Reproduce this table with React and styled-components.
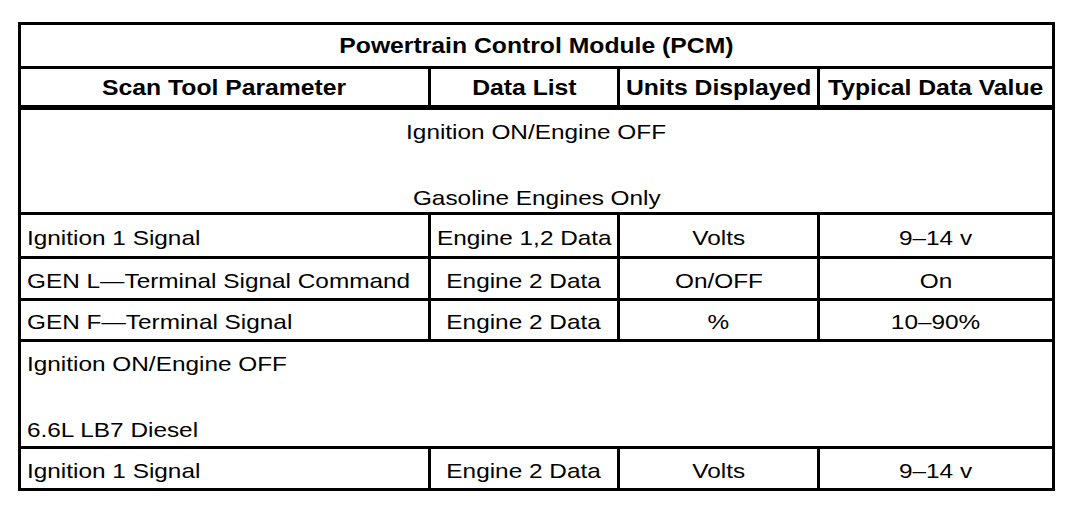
import React from 'react'
import styled, { createGlobalStyle } from 'styled-components'

const GlobalStyle = createGlobalStyle`
  html, body {
    margin: 0;
    padding: 0;
    background: #ffffff;
  }
  body {
    font-family: "Liberation Sans", Arial, Helvetica, sans-serif;
    color: #000000;
  }
`

const Page = styled.div`
  padding: 22px 0 0 18px;
`

const DataTable = styled.div`
  display: grid;
  width: 1037px;
  box-sizing: border-box;
  grid-template-columns: 407px 186px 197px 232px;
  grid-template-rows: 41px 38px 102px 41px 39px 38px 104px 39px;
  gap: 3px;
  padding: 3px;
  background: #000000;
`

const Cell = styled.div`
  background: #ffffff;
  display: flex;
  align-items: center;
  justify-content: ${({ $align }) => ($align === 'left' ? 'flex-start' : 'center')};
  padding: 3px 0 0 ${({ $align }) => ($align === 'left' ? '6px' : '0')};
  box-sizing: border-box;
  font-size: 21px;
  line-height: 31px;
  white-space: nowrap;
  overflow: visible;
`

const TitleCell = styled(Cell)`
  grid-column: 1 / -1;
  font-weight: bold;
  font-size: 21.5px;
  padding: 1px 0 0 0;
`

const HeadCell = styled(Cell)`
  font-weight: bold;
  font-size: 21.5px;
  padding: 2px 0 0 0;
  border-bottom: 2px solid #000000;
`

const SectionCell = styled.div`
  grid-column: 1 / -1;
  background: #ffffff;
  display: flex;
  flex-direction: column;
  align-items: ${({ $align }) => ($align === 'left' ? 'flex-start' : 'center')};
  padding: 5px 0 0 ${({ $align }) => ($align === 'left' ? '6px' : '0')};
  box-sizing: border-box;
  font-size: 21px;
  line-height: 33px;
  white-space: nowrap;
`

const Line = styled.div`
  height: 33px;
`

const Label = styled.span`
  display: inline-block;
  transform: scaleX(${({ $bold }) => ($bold ? 1.15 : 1.16)});
  transform-origin: ${({ $align }) => ($align === 'left' ? 'left center' : 'center center')};
`

const headers = ['Scan Tool Parameter', 'Data List', 'Units Displayed', 'Typical Data Value']

const sections = [
  {
    align: 'center',
    lines: ['Ignition ON/Engine OFF', '', 'Gasoline Engines Only'],
    rows: [
      ['Ignition 1 Signal', 'Engine 1,2 Data', 'Volts', '9–14 v'],
      ['GEN L—Terminal Signal Command', 'Engine 2 Data', 'On/OFF', 'On'],
      ['GEN F—Terminal Signal', 'Engine 2 Data', '%', '10–90%'],
    ],
  },
  {
    align: 'left',
    lines: ['Ignition ON/Engine OFF', '', '6.6L LB7 Diesel'],
    rows: [['Ignition 1 Signal', 'Engine 2 Data', 'Volts', '9–14 v']],
  },
]

const App = () => {
  return (
    <>
      <GlobalStyle />
      <Page>
        <DataTable>
          <TitleCell>
            <Label $bold>Powertrain Control Module (PCM)</Label>
          </TitleCell>
          {headers.map((h) => (
            <HeadCell key={h}>
              <Label $bold>{h}</Label>
            </HeadCell>
          ))}
          {sections.map((section, si) => (
            <React.Fragment key={si}>
              <SectionCell $align={section.align}>
                {section.lines.map((line, li) => (
                  <Line key={li}>
                    {line ? <Label $align={section.align}>{line}</Label> : '\u00a0'}
                  </Line>
                ))}
              </SectionCell>
              {section.rows.map((row, ri) =>
                row.map((value, ci) => (
                  <Cell key={`${ri}-${ci}`} $align={ci === 0 ? 'left' : 'center'}>
                    <Label $align={ci === 0 ? 'left' : 'center'}>{value}</Label>
                  </Cell>
                ))
              )}
            </React.Fragment>
          ))}
        </DataTable>
      </Page>
    </>
  )
}

export default App
